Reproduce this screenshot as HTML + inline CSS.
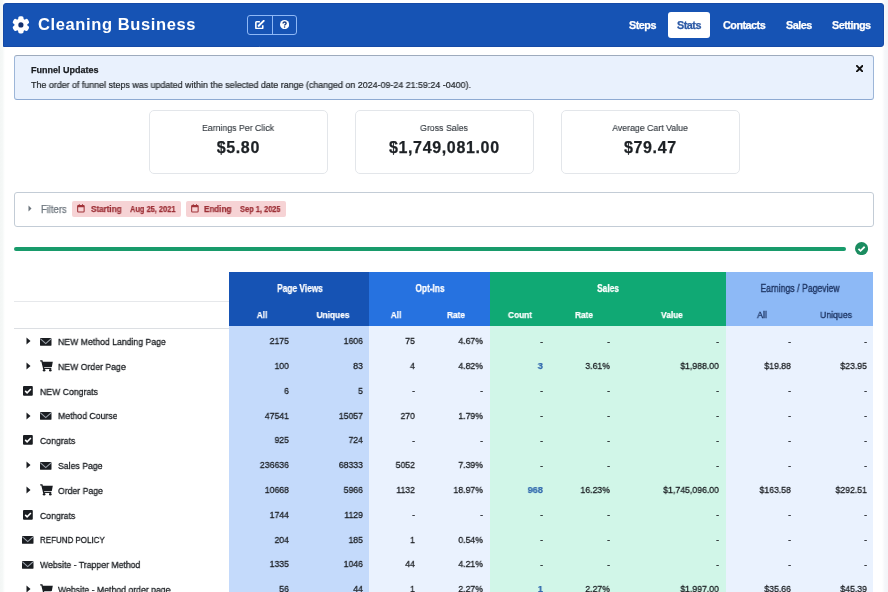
<!DOCTYPE html>
<html><head><meta charset="utf-8"><style>
*{box-sizing:border-box;margin:0;padding:0}
html,body{width:888px;height:592px;overflow:hidden;background:#fff;font-family:"Liberation Sans",sans-serif;color:#212529}
.a{position:absolute;white-space:nowrap}
.L{transform-origin:0 50%}
.R{transform-origin:100% 50%;text-align:right}
.C{transform-origin:50% 50%;text-align:center}
.a{-webkit-text-stroke:0.25px currentColor;will-change:transform}
</style></head><body>
<div class="a" style="left:0px;top:0px;width:5px;height:592px;background:linear-gradient(90deg,#f3f6f5,#f5f8f7 50%,#fff)"></div>
<div class="a" style="left:882px;top:0px;width:6px;height:592px;background:linear-gradient(90deg,#fff,#f5f6f9 50%,#f3f4f7)"></div>
<div class="a" style="left:3.2px;top:3.3px;width:881.3px;height:43.7px;background:#1653b4;border:1px solid #154aa6;border-radius:3px 3px 3px 0"></div>
<svg class="a" style="left:11.9px;top:16px" width="17.8" height="17.8" viewBox="-10 -10 20 20"><g fill="#fff"><circle r="7.3"/><rect x="-3" y="-9.7" width="6" height="19.4" rx="2"/><rect x="-3" y="-9.7" width="6" height="19.4" rx="2" transform="rotate(60)"/><rect x="-3" y="-9.7" width="6" height="19.4" rx="2" transform="rotate(120)"/></g><circle r="2.9" fill="#14306e"/></svg>
<div class="a L" style="left:38.00px;top:15.28px;width:400px;font-size:16.5px;line-height:19.80px;color:#fff;font-weight:bold;letter-spacing:0.62px;-webkit-text-stroke:0;">Cleaning Business</div>
<div class="a" style="left:247px;top:15px;width:50px;height:20px;border:1px solid #8fb8f6;border-radius:3px"></div>
<div class="a" style="left:271.5px;top:15px;width:1px;height:20px;background:#8fb8f6"></div>
<svg class="a" style="left:255.2px;top:20.4px" width="10" height="9.4" viewBox="0 0 10 9.4"><path d="M4.9 1.7H1.6Q0.85 1.7 0.85 2.45V7.85Q0.85 8.6 1.6 8.6H7Q7.75 8.6 7.75 7.85V5.2" fill="none" stroke="#fff" stroke-width="1.6"/><path d="M3.7 5.8L8.7 0.9" stroke="#fff" stroke-width="2" stroke-linecap="round"/><path d="M3.2 6.4L3.5 4.9L4.8 6.1Z" fill="#fff"/></svg>
<svg class="a" style="left:279.5px;top:20.3px" width="9.2" height="9.2" viewBox="0 0 10 10"><circle cx="5" cy="5" r="5" fill="#fff"/><path d="M3.3 3.9Q3.3 2.2 5 2.2Q6.7 2.2 6.7 3.6Q6.7 4.5 5.7 5Q5 5.3 5 6" fill="none" stroke="#1a3f86" stroke-width="1.5"/><circle cx="5" cy="7.7" r="0.85" fill="#1a3f86"/></svg>
<div class="a" style="left:667.5px;top:12px;width:42px;height:26px;background:#fff;border-radius:3px"></div>
<div class="a L" style="left:628.90px;top:19.18px;width:400px;font-size:10.8px;line-height:12.96px;color:#fff;font-weight:bold;letter-spacing:-0.5px;">Steps</div>
<div class="a L" style="left:677.00px;top:19.18px;width:400px;font-size:10.8px;line-height:12.96px;color:#2d5aa6;font-weight:bold;letter-spacing:-0.5px;">Stats</div>
<div class="a L" style="left:722.80px;top:19.18px;width:400px;font-size:10.8px;line-height:12.96px;color:#fff;font-weight:bold;letter-spacing:-0.5px;">Contacts</div>
<div class="a L" style="left:785.80px;top:19.18px;width:400px;font-size:10.8px;line-height:12.96px;color:#fff;font-weight:bold;letter-spacing:-0.5px;">Sales</div>
<div class="a L" style="left:832.20px;top:19.18px;width:400px;font-size:10.8px;line-height:12.96px;color:#fff;font-weight:bold;letter-spacing:-0.5px;">Settings</div>
<div class="a" style="left:14px;top:55px;width:860px;height:44.5px;background:#e9f1fd;border:1px solid #9db6d8;border-top:1.8px solid #9eabbd;border-bottom:1.3px solid #8eaad2;border-radius:3px"></div>
<svg class="a" style="left:856.4px;top:64.6px" width="7.3" height="7.3" viewBox="0 0 8 8"><path d="M1 1L7 7M7 1L1 7" stroke="#111" stroke-width="2.1" stroke-linecap="square"/></svg>
<div class="a L" style="left:30.60px;top:64.78px;width:400px;font-size:9px;line-height:10.80px;color:#1a1d21;font-weight:bold;">Funnel Updates</div>
<div class="a L" style="left:30.60px;top:79.88px;width:400px;font-size:9px;line-height:10.80px;color:#212529;transform:scaleX(0.988);-webkit-text-stroke:0.2px currentColor;">The order of funnel steps was updated within the selected date range (changed on 2024-09-24 21:59:24 -0400).</div>
<div class="a" style="left:148.5px;top:109.5px;width:179px;height:63.5px;border:1px solid #e3e6ea;border-radius:5px;background:#fff"></div>
<div class="a C" style="left:37.50px;top:122.12px;width:400px;font-size:9.7px;line-height:11.64px;color:#343a40;transform:scaleX(0.905);-webkit-text-stroke:0.15px currentColor;">Earnings Per Click</div>
<div class="a C" style="left:37.50px;top:137.86px;width:400px;font-size:16px;line-height:19.20px;color:#1d2125;font-weight:bold;letter-spacing:0.65px;text-indent:0.65px;">$5.80</div>
<div class="a" style="left:354.5px;top:109.5px;width:179px;height:63.5px;border:1px solid #e3e6ea;border-radius:5px;background:#fff"></div>
<div class="a C" style="left:243.50px;top:122.12px;width:400px;font-size:9.7px;line-height:11.64px;color:#343a40;transform:scaleX(0.905);-webkit-text-stroke:0.15px currentColor;">Gross Sales</div>
<div class="a C" style="left:243.50px;top:137.86px;width:400px;font-size:16px;line-height:19.20px;color:#1d2125;font-weight:bold;letter-spacing:0.65px;text-indent:0.65px;">$1,749,081.00</div>
<div class="a" style="left:560.5px;top:109.5px;width:179px;height:63.5px;border:1px solid #e3e6ea;border-radius:5px;background:#fff"></div>
<div class="a C" style="left:449.50px;top:122.12px;width:400px;font-size:9.7px;line-height:11.64px;color:#343a40;transform:scaleX(0.905);-webkit-text-stroke:0.15px currentColor;">Average Cart Value</div>
<div class="a C" style="left:449.50px;top:137.86px;width:400px;font-size:16px;line-height:19.20px;color:#1d2125;font-weight:bold;letter-spacing:0.65px;text-indent:0.65px;">$79.47</div>
<div class="a" style="left:14px;top:192.3px;width:860px;height:35.2px;border:1px solid #c3ccd6;border-radius:3px"></div>
<svg class="a" style="left:27.5px;top:205px" width="4" height="7" viewBox="0 0 4 7"><path d="M0.5 0.5L3.5 3.5L0.5 6.5Z" fill="#6c757d"/></svg>
<div class="a L" style="left:40.50px;top:203.53px;width:400px;font-size:10px;line-height:12.00px;color:#6c757d;transform:scaleX(0.94);-webkit-text-stroke:0.25px currentColor;">Filters</div>
<div class="a" style="left:72px;top:201px;width:109px;height:15.9px;background:#f6d3d5;border-radius:2px"></div>
<div class="a" style="left:186px;top:201px;width:100px;height:15.9px;background:#f6d3d5;border-radius:2px"></div>
<svg class="a" style="left:77.1px;top:204.3px" width="7.8" height="8.6" viewBox="0 0 8 9"><rect x="0.6" y="1.6" width="6.8" height="6.8" rx="0.8" fill="none" stroke="#a03238" stroke-width="1.1"/><rect x="0.6" y="1.6" width="6.8" height="1.8" fill="#a03238"/><rect x="1.8" y="0.2" width="1" height="2" fill="#a03238"/><rect x="5.2" y="0.2" width="1" height="2" fill="#a03238"/></svg>
<svg class="a" style="left:191.3px;top:204.3px" width="7.8" height="8.6" viewBox="0 0 8 9"><rect x="0.6" y="1.6" width="6.8" height="6.8" rx="0.8" fill="none" stroke="#a03238" stroke-width="1.1"/><rect x="0.6" y="1.6" width="6.8" height="1.8" fill="#a03238"/><rect x="1.8" y="0.2" width="1" height="2" fill="#a03238"/><rect x="5.2" y="0.2" width="1" height="2" fill="#a03238"/></svg>
<div class="a L" style="left:90.50px;top:203.95px;width:400px;font-size:8.5px;line-height:10.20px;color:#9c2f36;font-weight:bold;transform:scaleX(0.95);">Starting</div>
<div class="a L" style="left:130.00px;top:203.95px;width:400px;font-size:8.5px;line-height:10.20px;color:#9c2f36;font-weight:bold;transform:scaleX(0.875);">Aug 25, 2021</div>
<div class="a L" style="left:204.00px;top:203.95px;width:400px;font-size:8.5px;line-height:10.20px;color:#9c2f36;font-weight:bold;transform:scaleX(0.95);">Ending</div>
<div class="a L" style="left:239.70px;top:203.95px;width:400px;font-size:8.5px;line-height:10.20px;color:#9c2f36;font-weight:bold;transform:scaleX(0.875);">Sep 1, 2025</div>
<div class="a" style="left:14px;top:247px;width:832px;height:4px;background:#189b6b;border-radius:2px"></div>
<svg class="a" style="left:854.6px;top:241.8px" width="13.1" height="13.1" viewBox="0 0 16 16"><circle cx="8" cy="8" r="8" fill="#1b8c60"/><path d="M4.2 8.3l2.6 2.5 5-5" stroke="#fff" stroke-width="2.2" fill="none"/></svg>
<div class="a" style="left:229.4px;top:272.2px;width:139.6px;height:53.80000000000001px;background:#1653b4"></div>
<div class="a" style="left:369px;top:272.2px;width:121px;height:53.80000000000001px;background:#2672e0"></div>
<div class="a" style="left:490px;top:272.2px;width:235.5px;height:53.80000000000001px;background:#10a974"></div>
<div class="a" style="left:725.5px;top:272.2px;width:147px;height:53.80000000000001px;background:#8db9f6"></div>
<div class="a" style="left:229.4px;top:326px;width:139.6px;height:270px;background:#c4dafb"></div>
<div class="a" style="left:369px;top:326px;width:121px;height:270px;background:#eaf2fe"></div>
<div class="a" style="left:490px;top:326px;width:235.5px;height:270px;background:#d1f6e8"></div>
<div class="a" style="left:725.5px;top:326px;width:147px;height:270px;background:#eaf2fe"></div>
<div class="a" style="left:14px;top:301px;width:215.4px;height:1px;background:#e6e8eb"></div>
<div class="a" style="left:14px;top:328px;width:215.4px;height:1px;background:#dcdfe3"></div>
<div class="a C" style="left:99.80px;top:282.83px;width:400px;font-size:10px;line-height:12.00px;color:#fff;font-weight:bold;transform:scaleX(0.835);">Page Views</div>
<div class="a C" style="left:230.00px;top:282.83px;width:400px;font-size:10px;line-height:12.00px;color:#fff;font-weight:bold;transform:scaleX(0.835);">Opt-Ins</div>
<div class="a C" style="left:408.00px;top:282.83px;width:400px;font-size:10px;line-height:12.00px;color:#fff;font-weight:bold;transform:scaleX(0.835);">Sales</div>
<div class="a C" style="left:599.70px;top:282.83px;width:400px;font-size:10px;line-height:12.00px;color:#1e3563;transform:scaleX(0.87);-webkit-text-stroke:0.35px currentColor;">Earnings / Pageview</div>
<div class="a C" style="left:62.40px;top:309.21px;width:400px;font-size:9.5px;line-height:11.40px;color:#fff;font-weight:bold;transform:scaleX(0.875);">All</div>
<div class="a C" style="left:133.40px;top:309.21px;width:400px;font-size:9.5px;line-height:11.40px;color:#fff;font-weight:bold;transform:scaleX(0.875);">Uniques</div>
<div class="a C" style="left:195.60px;top:309.21px;width:400px;font-size:9.5px;line-height:11.40px;color:#fff;font-weight:bold;transform:scaleX(0.875);">All</div>
<div class="a C" style="left:255.50px;top:309.21px;width:400px;font-size:9.5px;line-height:11.40px;color:#fff;font-weight:bold;transform:scaleX(0.875);">Rate</div>
<div class="a C" style="left:319.60px;top:309.21px;width:400px;font-size:9.5px;line-height:11.40px;color:#fff;font-weight:bold;transform:scaleX(0.875);">Count</div>
<div class="a C" style="left:383.70px;top:309.21px;width:400px;font-size:9.5px;line-height:11.40px;color:#fff;font-weight:bold;transform:scaleX(0.875);">Rate</div>
<div class="a C" style="left:471.60px;top:309.21px;width:400px;font-size:9.5px;line-height:11.40px;color:#fff;font-weight:bold;transform:scaleX(0.875);">Value</div>
<div class="a C" style="left:562.00px;top:309.21px;width:400px;font-size:9.5px;line-height:11.40px;color:#1e3563;transform:scaleX(0.915);-webkit-text-stroke:0.35px currentColor;">All</div>
<div class="a C" style="left:635.70px;top:309.21px;width:400px;font-size:9.5px;line-height:11.40px;color:#1e3563;transform:scaleX(0.915);-webkit-text-stroke:0.35px currentColor;">Uniques</div>
<svg class="a" style="left:25.5px;top:337.20px" width="5" height="8" viewBox="0 0 5 8"><path d="M0.5 0.5L4.5 4L0.5 7.5Z" fill="#1a1d21"/></svg>
<svg class="a" style="left:39.699999999999996px;top:337.60px" width="11.5" height="7.8" viewBox="0 0 11.5 7.8"><rect x="0" y="0" width="11.5" height="7.8" rx="0.9" fill="#1a1d21"/><path d="M0.5 0.9L5.75 5.6L11 0.9" fill="none" stroke="#9ea5ae" stroke-width="1.1"/></svg>
<div class="a L" style="left:57.60px;top:336.01px;width:400px;font-size:9.5px;line-height:11.40px;color:#1a1d21;transform:scaleX(0.915);-webkit-text-stroke:0.3px currentColor;">NEW Method Landing Page</div>
<div class="a R" style="left:-111.20px;top:335.12px;width:400px;font-size:9.8px;line-height:11.76px;color:#1a1d21;transform:scaleX(0.89);-webkit-text-stroke:0.3px currentColor;">2175</div>
<div class="a R" style="left:-37.00px;top:335.12px;width:400px;font-size:9.8px;line-height:11.76px;color:#1a1d21;transform:scaleX(0.89);-webkit-text-stroke:0.3px currentColor;">1606</div>
<div class="a R" style="left:14.60px;top:335.12px;width:400px;font-size:9.8px;line-height:11.76px;color:#1a1d21;transform:scaleX(0.89);-webkit-text-stroke:0.3px currentColor;">75</div>
<div class="a R" style="left:82.50px;top:335.12px;width:400px;font-size:9.8px;line-height:11.76px;color:#1a1d21;transform:scaleX(0.89);-webkit-text-stroke:0.3px currentColor;">4.67%</div>
<div class="a R" style="left:143.00px;top:335.72px;width:400px;font-size:9.8px;line-height:11.76px;color:#1a1d21;transform:scaleX(0.89);-webkit-text-stroke:0.3px currentColor;">-</div>
<div class="a R" style="left:210.30px;top:335.72px;width:400px;font-size:9.8px;line-height:11.76px;color:#1a1d21;transform:scaleX(0.89);-webkit-text-stroke:0.3px currentColor;">-</div>
<div class="a R" style="left:318.60px;top:335.72px;width:400px;font-size:9.8px;line-height:11.76px;color:#1a1d21;transform:scaleX(0.89);-webkit-text-stroke:0.3px currentColor;">-</div>
<div class="a R" style="left:390.80px;top:335.72px;width:400px;font-size:9.8px;line-height:11.76px;color:#1a1d21;transform:scaleX(0.89);-webkit-text-stroke:0.3px currentColor;">-</div>
<div class="a R" style="left:466.50px;top:335.72px;width:400px;font-size:9.8px;line-height:11.76px;color:#1a1d21;transform:scaleX(0.89);-webkit-text-stroke:0.3px currentColor;">-</div>
<svg class="a" style="left:25.5px;top:362.00px" width="5" height="8" viewBox="0 0 5 8"><path d="M0.5 0.5L4.5 4L0.5 7.5Z" fill="#1a1d21"/></svg>
<svg class="a" style="left:40.0px;top:360.40px" width="13" height="11.5" viewBox="0 0 13 11.5"><path d="M0.2 0.9H1.9L3.7 8.4H11.3" fill="none" stroke="#1a1d21" stroke-width="1.4"/><path d="M2.2 1.8H12.8L11.8 6.9H3.4Z" fill="#1a1d21"/><circle cx="4.1" cy="10.2" r="1.3" fill="#1a1d21"/><circle cx="10.3" cy="10.2" r="1.3" fill="#1a1d21"/></svg>
<div class="a L" style="left:57.60px;top:360.81px;width:400px;font-size:9.5px;line-height:11.40px;color:#1a1d21;transform:scaleX(0.915);-webkit-text-stroke:0.3px currentColor;">NEW Order Page</div>
<div class="a R" style="left:-111.20px;top:359.92px;width:400px;font-size:9.8px;line-height:11.76px;color:#1a1d21;transform:scaleX(0.89);-webkit-text-stroke:0.3px currentColor;">100</div>
<div class="a R" style="left:-37.00px;top:359.92px;width:400px;font-size:9.8px;line-height:11.76px;color:#1a1d21;transform:scaleX(0.89);-webkit-text-stroke:0.3px currentColor;">83</div>
<div class="a R" style="left:14.60px;top:359.92px;width:400px;font-size:9.8px;line-height:11.76px;color:#1a1d21;transform:scaleX(0.89);-webkit-text-stroke:0.3px currentColor;">4</div>
<div class="a R" style="left:82.50px;top:359.92px;width:400px;font-size:9.8px;line-height:11.76px;color:#1a1d21;transform:scaleX(0.89);-webkit-text-stroke:0.3px currentColor;">4.82%</div>
<div class="a R" style="left:143.00px;top:359.92px;width:400px;font-size:9.8px;line-height:11.76px;color:#336aae;font-weight:bold;transform:scaleX(0.95);">3</div>
<div class="a R" style="left:210.30px;top:359.92px;width:400px;font-size:9.8px;line-height:11.76px;color:#1a1d21;transform:scaleX(0.89);-webkit-text-stroke:0.3px currentColor;">3.61%</div>
<div class="a R" style="left:318.60px;top:359.92px;width:400px;font-size:9.8px;line-height:11.76px;color:#1a1d21;transform:scaleX(0.89);-webkit-text-stroke:0.3px currentColor;">$1,988.00</div>
<div class="a R" style="left:390.80px;top:359.92px;width:400px;font-size:9.8px;line-height:11.76px;color:#1a1d21;transform:scaleX(0.89);-webkit-text-stroke:0.3px currentColor;">$19.88</div>
<div class="a R" style="left:466.50px;top:359.92px;width:400px;font-size:9.8px;line-height:11.76px;color:#1a1d21;transform:scaleX(0.89);-webkit-text-stroke:0.3px currentColor;">$23.95</div>
<svg class="a" style="left:23px;top:385.60px" width="10" height="10" viewBox="0 0 10 10"><rect x="0" y="0" width="9.8" height="9.8" rx="1" fill="#1a1d21"/><path d="M2.2 4.9L4.1 6.8L7.9 3" stroke="#fff" stroke-width="1.6" fill="none"/></svg>
<div class="a L" style="left:39.70px;top:385.61px;width:400px;font-size:9.5px;line-height:11.40px;color:#1a1d21;transform:scaleX(0.915);-webkit-text-stroke:0.3px currentColor;">NEW Congrats</div>
<div class="a R" style="left:-111.20px;top:384.72px;width:400px;font-size:9.8px;line-height:11.76px;color:#1a1d21;transform:scaleX(0.89);-webkit-text-stroke:0.3px currentColor;">6</div>
<div class="a R" style="left:-37.00px;top:384.72px;width:400px;font-size:9.8px;line-height:11.76px;color:#1a1d21;transform:scaleX(0.89);-webkit-text-stroke:0.3px currentColor;">5</div>
<div class="a R" style="left:14.60px;top:385.32px;width:400px;font-size:9.8px;line-height:11.76px;color:#1a1d21;transform:scaleX(0.89);-webkit-text-stroke:0.3px currentColor;">-</div>
<div class="a R" style="left:82.50px;top:385.32px;width:400px;font-size:9.8px;line-height:11.76px;color:#1a1d21;transform:scaleX(0.89);-webkit-text-stroke:0.3px currentColor;">-</div>
<div class="a R" style="left:143.00px;top:385.32px;width:400px;font-size:9.8px;line-height:11.76px;color:#1a1d21;transform:scaleX(0.89);-webkit-text-stroke:0.3px currentColor;">-</div>
<div class="a R" style="left:210.30px;top:385.32px;width:400px;font-size:9.8px;line-height:11.76px;color:#1a1d21;transform:scaleX(0.89);-webkit-text-stroke:0.3px currentColor;">-</div>
<div class="a R" style="left:318.60px;top:385.32px;width:400px;font-size:9.8px;line-height:11.76px;color:#1a1d21;transform:scaleX(0.89);-webkit-text-stroke:0.3px currentColor;">-</div>
<div class="a R" style="left:390.80px;top:385.32px;width:400px;font-size:9.8px;line-height:11.76px;color:#1a1d21;transform:scaleX(0.89);-webkit-text-stroke:0.3px currentColor;">-</div>
<div class="a R" style="left:466.50px;top:385.32px;width:400px;font-size:9.8px;line-height:11.76px;color:#1a1d21;transform:scaleX(0.89);-webkit-text-stroke:0.3px currentColor;">-</div>
<svg class="a" style="left:25.5px;top:411.60px" width="5" height="8" viewBox="0 0 5 8"><path d="M0.5 0.5L4.5 4L0.5 7.5Z" fill="#1a1d21"/></svg>
<svg class="a" style="left:39.699999999999996px;top:412.00px" width="11.5" height="7.8" viewBox="0 0 11.5 7.8"><rect x="0" y="0" width="11.5" height="7.8" rx="0.9" fill="#1a1d21"/><path d="M0.5 0.9L5.75 5.6L11 0.9" fill="none" stroke="#9ea5ae" stroke-width="1.1"/></svg>
<div class="a L" style="left:57.60px;top:410.41px;width:400px;font-size:9.5px;line-height:11.40px;color:#1a1d21;transform:scaleX(0.915);-webkit-text-stroke:0.3px currentColor;">Method Course</div>
<div class="a R" style="left:-111.20px;top:409.52px;width:400px;font-size:9.8px;line-height:11.76px;color:#1a1d21;transform:scaleX(0.89);-webkit-text-stroke:0.3px currentColor;">47541</div>
<div class="a R" style="left:-37.00px;top:409.52px;width:400px;font-size:9.8px;line-height:11.76px;color:#1a1d21;transform:scaleX(0.89);-webkit-text-stroke:0.3px currentColor;">15057</div>
<div class="a R" style="left:14.60px;top:409.52px;width:400px;font-size:9.8px;line-height:11.76px;color:#1a1d21;transform:scaleX(0.89);-webkit-text-stroke:0.3px currentColor;">270</div>
<div class="a R" style="left:82.50px;top:409.52px;width:400px;font-size:9.8px;line-height:11.76px;color:#1a1d21;transform:scaleX(0.89);-webkit-text-stroke:0.3px currentColor;">1.79%</div>
<div class="a R" style="left:143.00px;top:410.12px;width:400px;font-size:9.8px;line-height:11.76px;color:#1a1d21;transform:scaleX(0.89);-webkit-text-stroke:0.3px currentColor;">-</div>
<div class="a R" style="left:210.30px;top:410.12px;width:400px;font-size:9.8px;line-height:11.76px;color:#1a1d21;transform:scaleX(0.89);-webkit-text-stroke:0.3px currentColor;">-</div>
<div class="a R" style="left:318.60px;top:410.12px;width:400px;font-size:9.8px;line-height:11.76px;color:#1a1d21;transform:scaleX(0.89);-webkit-text-stroke:0.3px currentColor;">-</div>
<div class="a R" style="left:390.80px;top:410.12px;width:400px;font-size:9.8px;line-height:11.76px;color:#1a1d21;transform:scaleX(0.89);-webkit-text-stroke:0.3px currentColor;">-</div>
<div class="a R" style="left:466.50px;top:410.12px;width:400px;font-size:9.8px;line-height:11.76px;color:#1a1d21;transform:scaleX(0.89);-webkit-text-stroke:0.3px currentColor;">-</div>
<svg class="a" style="left:23px;top:435.20px" width="10" height="10" viewBox="0 0 10 10"><rect x="0" y="0" width="9.8" height="9.8" rx="1" fill="#1a1d21"/><path d="M2.2 4.9L4.1 6.8L7.9 3" stroke="#fff" stroke-width="1.6" fill="none"/></svg>
<div class="a L" style="left:39.70px;top:435.21px;width:400px;font-size:9.5px;line-height:11.40px;color:#1a1d21;transform:scaleX(0.915);-webkit-text-stroke:0.3px currentColor;">Congrats</div>
<div class="a R" style="left:-111.20px;top:434.32px;width:400px;font-size:9.8px;line-height:11.76px;color:#1a1d21;transform:scaleX(0.89);-webkit-text-stroke:0.3px currentColor;">925</div>
<div class="a R" style="left:-37.00px;top:434.32px;width:400px;font-size:9.8px;line-height:11.76px;color:#1a1d21;transform:scaleX(0.89);-webkit-text-stroke:0.3px currentColor;">724</div>
<div class="a R" style="left:14.60px;top:434.92px;width:400px;font-size:9.8px;line-height:11.76px;color:#1a1d21;transform:scaleX(0.89);-webkit-text-stroke:0.3px currentColor;">-</div>
<div class="a R" style="left:82.50px;top:434.92px;width:400px;font-size:9.8px;line-height:11.76px;color:#1a1d21;transform:scaleX(0.89);-webkit-text-stroke:0.3px currentColor;">-</div>
<div class="a R" style="left:143.00px;top:434.92px;width:400px;font-size:9.8px;line-height:11.76px;color:#1a1d21;transform:scaleX(0.89);-webkit-text-stroke:0.3px currentColor;">-</div>
<div class="a R" style="left:210.30px;top:434.92px;width:400px;font-size:9.8px;line-height:11.76px;color:#1a1d21;transform:scaleX(0.89);-webkit-text-stroke:0.3px currentColor;">-</div>
<div class="a R" style="left:318.60px;top:434.92px;width:400px;font-size:9.8px;line-height:11.76px;color:#1a1d21;transform:scaleX(0.89);-webkit-text-stroke:0.3px currentColor;">-</div>
<div class="a R" style="left:390.80px;top:434.92px;width:400px;font-size:9.8px;line-height:11.76px;color:#1a1d21;transform:scaleX(0.89);-webkit-text-stroke:0.3px currentColor;">-</div>
<div class="a R" style="left:466.50px;top:434.92px;width:400px;font-size:9.8px;line-height:11.76px;color:#1a1d21;transform:scaleX(0.89);-webkit-text-stroke:0.3px currentColor;">-</div>
<svg class="a" style="left:25.5px;top:461.20px" width="5" height="8" viewBox="0 0 5 8"><path d="M0.5 0.5L4.5 4L0.5 7.5Z" fill="#1a1d21"/></svg>
<svg class="a" style="left:39.699999999999996px;top:461.60px" width="11.5" height="7.8" viewBox="0 0 11.5 7.8"><rect x="0" y="0" width="11.5" height="7.8" rx="0.9" fill="#1a1d21"/><path d="M0.5 0.9L5.75 5.6L11 0.9" fill="none" stroke="#9ea5ae" stroke-width="1.1"/></svg>
<div class="a L" style="left:57.60px;top:460.01px;width:400px;font-size:9.5px;line-height:11.40px;color:#1a1d21;transform:scaleX(0.915);-webkit-text-stroke:0.3px currentColor;">Sales Page</div>
<div class="a R" style="left:-111.20px;top:459.12px;width:400px;font-size:9.8px;line-height:11.76px;color:#1a1d21;transform:scaleX(0.89);-webkit-text-stroke:0.3px currentColor;">236636</div>
<div class="a R" style="left:-37.00px;top:459.12px;width:400px;font-size:9.8px;line-height:11.76px;color:#1a1d21;transform:scaleX(0.89);-webkit-text-stroke:0.3px currentColor;">68333</div>
<div class="a R" style="left:14.60px;top:459.12px;width:400px;font-size:9.8px;line-height:11.76px;color:#1a1d21;transform:scaleX(0.89);-webkit-text-stroke:0.3px currentColor;">5052</div>
<div class="a R" style="left:82.50px;top:459.12px;width:400px;font-size:9.8px;line-height:11.76px;color:#1a1d21;transform:scaleX(0.89);-webkit-text-stroke:0.3px currentColor;">7.39%</div>
<div class="a R" style="left:143.00px;top:459.72px;width:400px;font-size:9.8px;line-height:11.76px;color:#1a1d21;transform:scaleX(0.89);-webkit-text-stroke:0.3px currentColor;">-</div>
<div class="a R" style="left:210.30px;top:459.72px;width:400px;font-size:9.8px;line-height:11.76px;color:#1a1d21;transform:scaleX(0.89);-webkit-text-stroke:0.3px currentColor;">-</div>
<div class="a R" style="left:318.60px;top:459.72px;width:400px;font-size:9.8px;line-height:11.76px;color:#1a1d21;transform:scaleX(0.89);-webkit-text-stroke:0.3px currentColor;">-</div>
<div class="a R" style="left:390.80px;top:459.72px;width:400px;font-size:9.8px;line-height:11.76px;color:#1a1d21;transform:scaleX(0.89);-webkit-text-stroke:0.3px currentColor;">-</div>
<div class="a R" style="left:466.50px;top:459.72px;width:400px;font-size:9.8px;line-height:11.76px;color:#1a1d21;transform:scaleX(0.89);-webkit-text-stroke:0.3px currentColor;">-</div>
<svg class="a" style="left:25.5px;top:486.00px" width="5" height="8" viewBox="0 0 5 8"><path d="M0.5 0.5L4.5 4L0.5 7.5Z" fill="#1a1d21"/></svg>
<svg class="a" style="left:40.0px;top:484.40px" width="13" height="11.5" viewBox="0 0 13 11.5"><path d="M0.2 0.9H1.9L3.7 8.4H11.3" fill="none" stroke="#1a1d21" stroke-width="1.4"/><path d="M2.2 1.8H12.8L11.8 6.9H3.4Z" fill="#1a1d21"/><circle cx="4.1" cy="10.2" r="1.3" fill="#1a1d21"/><circle cx="10.3" cy="10.2" r="1.3" fill="#1a1d21"/></svg>
<div class="a L" style="left:57.60px;top:484.81px;width:400px;font-size:9.5px;line-height:11.40px;color:#1a1d21;transform:scaleX(0.915);-webkit-text-stroke:0.3px currentColor;">Order Page</div>
<div class="a R" style="left:-111.20px;top:483.92px;width:400px;font-size:9.8px;line-height:11.76px;color:#1a1d21;transform:scaleX(0.89);-webkit-text-stroke:0.3px currentColor;">10668</div>
<div class="a R" style="left:-37.00px;top:483.92px;width:400px;font-size:9.8px;line-height:11.76px;color:#1a1d21;transform:scaleX(0.89);-webkit-text-stroke:0.3px currentColor;">5966</div>
<div class="a R" style="left:14.60px;top:483.92px;width:400px;font-size:9.8px;line-height:11.76px;color:#1a1d21;transform:scaleX(0.89);-webkit-text-stroke:0.3px currentColor;">1132</div>
<div class="a R" style="left:82.50px;top:483.92px;width:400px;font-size:9.8px;line-height:11.76px;color:#1a1d21;transform:scaleX(0.89);-webkit-text-stroke:0.3px currentColor;">18.97%</div>
<div class="a R" style="left:143.00px;top:483.92px;width:400px;font-size:9.8px;line-height:11.76px;color:#336aae;font-weight:bold;transform:scaleX(0.95);">968</div>
<div class="a R" style="left:210.30px;top:483.92px;width:400px;font-size:9.8px;line-height:11.76px;color:#1a1d21;transform:scaleX(0.89);-webkit-text-stroke:0.3px currentColor;">16.23%</div>
<div class="a R" style="left:318.60px;top:483.92px;width:400px;font-size:9.8px;line-height:11.76px;color:#1a1d21;transform:scaleX(0.89);-webkit-text-stroke:0.3px currentColor;">$1,745,096.00</div>
<div class="a R" style="left:390.80px;top:483.92px;width:400px;font-size:9.8px;line-height:11.76px;color:#1a1d21;transform:scaleX(0.89);-webkit-text-stroke:0.3px currentColor;">$163.58</div>
<div class="a R" style="left:466.50px;top:483.92px;width:400px;font-size:9.8px;line-height:11.76px;color:#1a1d21;transform:scaleX(0.89);-webkit-text-stroke:0.3px currentColor;">$292.51</div>
<svg class="a" style="left:23px;top:509.60px" width="10" height="10" viewBox="0 0 10 10"><rect x="0" y="0" width="9.8" height="9.8" rx="1" fill="#1a1d21"/><path d="M2.2 4.9L4.1 6.8L7.9 3" stroke="#fff" stroke-width="1.6" fill="none"/></svg>
<div class="a L" style="left:39.70px;top:509.61px;width:400px;font-size:9.5px;line-height:11.40px;color:#1a1d21;transform:scaleX(0.915);-webkit-text-stroke:0.3px currentColor;">Congrats</div>
<div class="a R" style="left:-111.20px;top:508.72px;width:400px;font-size:9.8px;line-height:11.76px;color:#1a1d21;transform:scaleX(0.89);-webkit-text-stroke:0.3px currentColor;">1744</div>
<div class="a R" style="left:-37.00px;top:508.72px;width:400px;font-size:9.8px;line-height:11.76px;color:#1a1d21;transform:scaleX(0.89);-webkit-text-stroke:0.3px currentColor;">1129</div>
<div class="a R" style="left:14.60px;top:509.32px;width:400px;font-size:9.8px;line-height:11.76px;color:#1a1d21;transform:scaleX(0.89);-webkit-text-stroke:0.3px currentColor;">-</div>
<div class="a R" style="left:82.50px;top:509.32px;width:400px;font-size:9.8px;line-height:11.76px;color:#1a1d21;transform:scaleX(0.89);-webkit-text-stroke:0.3px currentColor;">-</div>
<div class="a R" style="left:143.00px;top:509.32px;width:400px;font-size:9.8px;line-height:11.76px;color:#1a1d21;transform:scaleX(0.89);-webkit-text-stroke:0.3px currentColor;">-</div>
<div class="a R" style="left:210.30px;top:509.32px;width:400px;font-size:9.8px;line-height:11.76px;color:#1a1d21;transform:scaleX(0.89);-webkit-text-stroke:0.3px currentColor;">-</div>
<div class="a R" style="left:318.60px;top:509.32px;width:400px;font-size:9.8px;line-height:11.76px;color:#1a1d21;transform:scaleX(0.89);-webkit-text-stroke:0.3px currentColor;">-</div>
<div class="a R" style="left:390.80px;top:509.32px;width:400px;font-size:9.8px;line-height:11.76px;color:#1a1d21;transform:scaleX(0.89);-webkit-text-stroke:0.3px currentColor;">-</div>
<div class="a R" style="left:466.50px;top:509.32px;width:400px;font-size:9.8px;line-height:11.76px;color:#1a1d21;transform:scaleX(0.89);-webkit-text-stroke:0.3px currentColor;">-</div>
<svg class="a" style="left:22.3px;top:536.00px" width="11.5" height="7.8" viewBox="0 0 11.5 7.8"><rect x="0" y="0" width="11.5" height="7.8" rx="0.9" fill="#1a1d21"/><path d="M0.5 0.9L5.75 5.6L11 0.9" fill="none" stroke="#9ea5ae" stroke-width="1.1"/></svg>
<div class="a L" style="left:39.70px;top:534.41px;width:400px;font-size:9.5px;line-height:11.40px;color:#1a1d21;transform:scaleX(0.84);-webkit-text-stroke:0.3px currentColor;">REFUND POLICY</div>
<div class="a R" style="left:-111.20px;top:533.52px;width:400px;font-size:9.8px;line-height:11.76px;color:#1a1d21;transform:scaleX(0.89);-webkit-text-stroke:0.3px currentColor;">204</div>
<div class="a R" style="left:-37.00px;top:533.52px;width:400px;font-size:9.8px;line-height:11.76px;color:#1a1d21;transform:scaleX(0.89);-webkit-text-stroke:0.3px currentColor;">185</div>
<div class="a R" style="left:14.60px;top:533.52px;width:400px;font-size:9.8px;line-height:11.76px;color:#1a1d21;transform:scaleX(0.89);-webkit-text-stroke:0.3px currentColor;">1</div>
<div class="a R" style="left:82.50px;top:533.52px;width:400px;font-size:9.8px;line-height:11.76px;color:#1a1d21;transform:scaleX(0.89);-webkit-text-stroke:0.3px currentColor;">0.54%</div>
<div class="a R" style="left:143.00px;top:534.12px;width:400px;font-size:9.8px;line-height:11.76px;color:#1a1d21;transform:scaleX(0.89);-webkit-text-stroke:0.3px currentColor;">-</div>
<div class="a R" style="left:210.30px;top:534.12px;width:400px;font-size:9.8px;line-height:11.76px;color:#1a1d21;transform:scaleX(0.89);-webkit-text-stroke:0.3px currentColor;">-</div>
<div class="a R" style="left:318.60px;top:534.12px;width:400px;font-size:9.8px;line-height:11.76px;color:#1a1d21;transform:scaleX(0.89);-webkit-text-stroke:0.3px currentColor;">-</div>
<div class="a R" style="left:390.80px;top:534.12px;width:400px;font-size:9.8px;line-height:11.76px;color:#1a1d21;transform:scaleX(0.89);-webkit-text-stroke:0.3px currentColor;">-</div>
<div class="a R" style="left:466.50px;top:534.12px;width:400px;font-size:9.8px;line-height:11.76px;color:#1a1d21;transform:scaleX(0.89);-webkit-text-stroke:0.3px currentColor;">-</div>
<svg class="a" style="left:22.3px;top:560.80px" width="11.5" height="7.8" viewBox="0 0 11.5 7.8"><rect x="0" y="0" width="11.5" height="7.8" rx="0.9" fill="#1a1d21"/><path d="M0.5 0.9L5.75 5.6L11 0.9" fill="none" stroke="#9ea5ae" stroke-width="1.1"/></svg>
<div class="a L" style="left:39.70px;top:559.21px;width:400px;font-size:9.5px;line-height:11.40px;color:#1a1d21;transform:scaleX(0.915);-webkit-text-stroke:0.3px currentColor;">Website - Trapper Method</div>
<div class="a R" style="left:-111.20px;top:558.32px;width:400px;font-size:9.8px;line-height:11.76px;color:#1a1d21;transform:scaleX(0.89);-webkit-text-stroke:0.3px currentColor;">1335</div>
<div class="a R" style="left:-37.00px;top:558.32px;width:400px;font-size:9.8px;line-height:11.76px;color:#1a1d21;transform:scaleX(0.89);-webkit-text-stroke:0.3px currentColor;">1046</div>
<div class="a R" style="left:14.60px;top:558.32px;width:400px;font-size:9.8px;line-height:11.76px;color:#1a1d21;transform:scaleX(0.89);-webkit-text-stroke:0.3px currentColor;">44</div>
<div class="a R" style="left:82.50px;top:558.32px;width:400px;font-size:9.8px;line-height:11.76px;color:#1a1d21;transform:scaleX(0.89);-webkit-text-stroke:0.3px currentColor;">4.21%</div>
<div class="a R" style="left:143.00px;top:558.92px;width:400px;font-size:9.8px;line-height:11.76px;color:#1a1d21;transform:scaleX(0.89);-webkit-text-stroke:0.3px currentColor;">-</div>
<div class="a R" style="left:210.30px;top:558.92px;width:400px;font-size:9.8px;line-height:11.76px;color:#1a1d21;transform:scaleX(0.89);-webkit-text-stroke:0.3px currentColor;">-</div>
<div class="a R" style="left:318.60px;top:558.92px;width:400px;font-size:9.8px;line-height:11.76px;color:#1a1d21;transform:scaleX(0.89);-webkit-text-stroke:0.3px currentColor;">-</div>
<div class="a R" style="left:390.80px;top:558.92px;width:400px;font-size:9.8px;line-height:11.76px;color:#1a1d21;transform:scaleX(0.89);-webkit-text-stroke:0.3px currentColor;">-</div>
<div class="a R" style="left:466.50px;top:558.92px;width:400px;font-size:9.8px;line-height:11.76px;color:#1a1d21;transform:scaleX(0.89);-webkit-text-stroke:0.3px currentColor;">-</div>
<svg class="a" style="left:25.5px;top:585.20px" width="5" height="8" viewBox="0 0 5 8"><path d="M0.5 0.5L4.5 4L0.5 7.5Z" fill="#1a1d21"/></svg>
<svg class="a" style="left:40.0px;top:583.60px" width="13" height="11.5" viewBox="0 0 13 11.5"><path d="M0.2 0.9H1.9L3.7 8.4H11.3" fill="none" stroke="#1a1d21" stroke-width="1.4"/><path d="M2.2 1.8H12.8L11.8 6.9H3.4Z" fill="#1a1d21"/><circle cx="4.1" cy="10.2" r="1.3" fill="#1a1d21"/><circle cx="10.3" cy="10.2" r="1.3" fill="#1a1d21"/></svg>
<div class="a L" style="left:57.60px;top:584.01px;width:400px;font-size:9.5px;line-height:11.40px;color:#1a1d21;transform:scaleX(0.915);-webkit-text-stroke:0.3px currentColor;">Website - Method order page</div>
<div class="a R" style="left:-111.20px;top:583.12px;width:400px;font-size:9.8px;line-height:11.76px;color:#1a1d21;transform:scaleX(0.89);-webkit-text-stroke:0.3px currentColor;">56</div>
<div class="a R" style="left:-37.00px;top:583.12px;width:400px;font-size:9.8px;line-height:11.76px;color:#1a1d21;transform:scaleX(0.89);-webkit-text-stroke:0.3px currentColor;">44</div>
<div class="a R" style="left:14.60px;top:583.12px;width:400px;font-size:9.8px;line-height:11.76px;color:#1a1d21;transform:scaleX(0.89);-webkit-text-stroke:0.3px currentColor;">1</div>
<div class="a R" style="left:82.50px;top:583.12px;width:400px;font-size:9.8px;line-height:11.76px;color:#1a1d21;transform:scaleX(0.89);-webkit-text-stroke:0.3px currentColor;">2.27%</div>
<div class="a R" style="left:143.00px;top:583.12px;width:400px;font-size:9.8px;line-height:11.76px;color:#336aae;font-weight:bold;transform:scaleX(0.95);">1</div>
<div class="a R" style="left:210.30px;top:583.12px;width:400px;font-size:9.8px;line-height:11.76px;color:#1a1d21;transform:scaleX(0.89);-webkit-text-stroke:0.3px currentColor;">2.27%</div>
<div class="a R" style="left:318.60px;top:583.12px;width:400px;font-size:9.8px;line-height:11.76px;color:#1a1d21;transform:scaleX(0.89);-webkit-text-stroke:0.3px currentColor;">$1,997.00</div>
<div class="a R" style="left:390.80px;top:583.12px;width:400px;font-size:9.8px;line-height:11.76px;color:#1a1d21;transform:scaleX(0.89);-webkit-text-stroke:0.3px currentColor;">$35.66</div>
<div class="a R" style="left:466.50px;top:583.12px;width:400px;font-size:9.8px;line-height:11.76px;color:#1a1d21;transform:scaleX(0.89);-webkit-text-stroke:0.3px currentColor;">$45.39</div>
</body></html>
